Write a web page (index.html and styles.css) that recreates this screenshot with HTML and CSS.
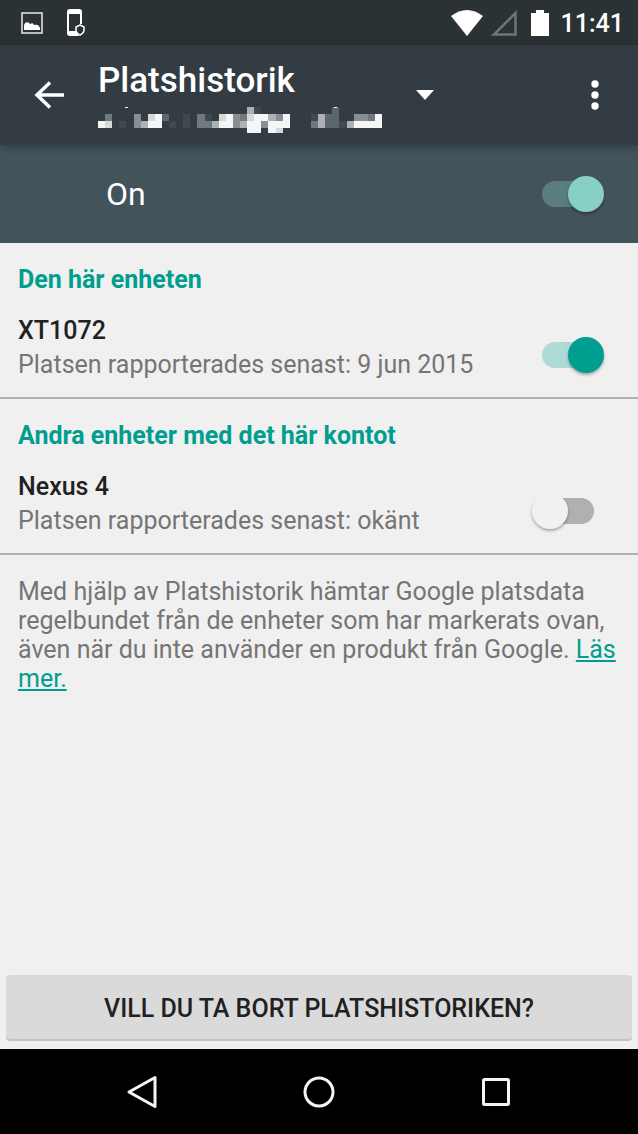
FILE: index.html
```html
<!DOCTYPE html>
<html lang="sv">
<head>
    <meta charset="UTF-8">
    <meta name="viewport" content="width=device-width, initial-scale=1.0">
    <title>Platshistorik</title>
    <link rel="stylesheet" href="styles.css">
</head>
<body>

    <div class="status-bar">
        <div class="status-group notifications">
            <svg width="22" height="22" viewBox="0 0 22 22">
                <rect x="1" y="1" width="20" height="20" fill="none" stroke="#e8ebec" stroke-width="1.500"/>
                <path d="M3 18v-4c0-4 4-5 6-2 2-1 3-1 4 1 3-1 5 0 6 3v2z" fill="#fff"/>
            </svg>
            <svg width="18" height="28" viewBox="0 0 18 28">
                <path d="M3 0h9q3 0 3 3v12h-2V5H2v17h7l3 5H3q-3 0-3-3V3q0-3 3-3z" fill="#fff"/>
                <path d="M13 16l4 2v3q0 3-4 5-4-2-4-5v-3z" fill="#2b3235" stroke="#fff" stroke-width="1.500"/>
            </svg>
        </div>
        <div class="status-group">
            <svg width="32" height="26" viewBox="0 0 32 26">
                <path d="M0 6Q16-6 32 6L16 26z" fill="#fff"/>
            </svg>
            <svg width="26" height="26" viewBox="0 0 26 26">
                <path d="M3 24.500H24.500V3z" fill="none" stroke="#6f7577" stroke-width="2.500"/>
            </svg>
            <svg class="battery" width="18" height="26" viewBox="0 0 18 26">
                <path d="M0 3h5V0h8v3h5v23H0z" fill="#fff"/>
            </svg>
            <span class="clock">11:41</span>
        </div>
    </div>

    <header class="app-bar">
        <button class="icon-button" aria-label="Tillbaka">
            <svg width="30" height="28" viewBox="0 0 30 28">
                <path d="M30 14H3M16 1.500L3 14l13 12.500" fill="none" stroke="#fff" stroke-width="3.500"/>
            </svg>
        </button>
        <button class="account" aria-label="Byt konto">
            <span class="account-text">
                <span class="title">Platshistorik</span>
                <!-- Masked account name, 40 x 4 blocks -->
                <svg class="masked" width="284" height="28" viewBox="0 0 40 4" preserveAspectRatio="none" shape-rendering="crispEdges">
                    <path fill="#3f4a50" d="M3 2h1v1h-1zM10 2h1v1h-1zM12 1h1v2h-1zM15 1h1v1h-1zM22 0h1v1h-1zM30 1h1v1h-1zM34 2h1v1h-1z"/>
                    <path fill="#5c676c" d="M9 1h1v1h-1zM32 1h1v2h-1zM33 0h1v3h-1z"/>
                    <path fill="#70797d" d="M1 1h1v1h-1zM14 1h1v2h-1zM15 2h1v1h-1zM20 1h1v1h-1zM30 2h1v1h-1zM38 1h1v1h-1z"/>
                    <path fill="#888e91" d="M5 1h1v2h-1zM19 1h1v2h-1zM23 2h1v1h-1zM25 1h1v1h-1zM36 1h2v1h-2z"/>
                    <path fill="#adb1b3" d="M6 2h1v1h-1zM16 2h1v1h-1zM20 2h1v1h-1zM21 0h1v1h-1zM24 1h1v1h-1zM31 1h1v2h-1zM35 2h1v1h-1z"/>
                    <path fill="#d6d8d9" d="M1 2h1v1h-1zM7 1h1v1h-1zM17 1h1v1h-1zM21 1h1v1h-1zM25 3h1v.7h-1z"/>
                    <path fill="#f4f5f5" d="M0 2h1v1h-1zM7 2h1v1h-1zM8 1h1v2h-1zM17 2h1v1h-1zM18 1h1v2h-1zM22 1h2v1h-2zM21 2h2v1.700h-2zM24 2h1v1.700h-1zM25 2h1v1h-1zM26 1h1v2h-1zM36 2h3v1h-3zM39 1h1v2h-1z"/>
                    <path fill="#f4f5f5" d="M3.800 0h.4v.15h-.4zM33.200 0h.4v.15h-.4z"/>
                </svg>
            </span>
            <svg width="18" height="10" viewBox="0 0 18 10">
                <path d="M0 0h18L9 10z" fill="#fff"/>
            </svg>
        </button>
        <button class="icon-button" aria-label="Fler alternativ">
            <svg width="8" height="30" viewBox="0 0 8 30">
                <g fill="#fff">
                    <circle cx="4" cy="4" r="3.700"/>
                    <circle cx="4" cy="15" r="3.700"/>
                    <circle cx="4" cy="26" r="3.700"/>
                </g>
            </svg>
        </button>
    </header>

    <div class="master-row">
        <label for="history">On</label>
        <input type="checkbox" class="switch light" id="history" checked>
    </div>

    <main>
        <section class="devices">
            <h2>Den här enheten</h2>
            <div class="device">
                <label for="xt1072">
                    <span class="device-name">XT1072</span>
                    <span class="device-info">Platsen rapporterades senast: 9 jun 2015</span>
                </label>
                <input type="checkbox" class="switch" id="xt1072" checked>
            </div>
        </section>

        <section class="devices">
            <h2>Andra enheter med det här kontot</h2>
            <div class="device">
                <label for="nexus4">
                    <span class="device-name">Nexus 4</span>
                    <span class="device-info">Platsen rapporterades senast: okänt</span>
                </label>
                <input type="checkbox" class="switch" id="nexus4">
            </div>
        </section>

        <p class="description">Med hjälp av Platshistorik hämtar Google platsdata regelbundet från de enheter som har markerats ovan, även när du inte använder en produkt från Google. <a href="#">Läs mer.</a></p>

        <button class="delete-button">VILL DU TA BORT PLATSHISTORIKEN?</button>
    </main>

    <nav class="nav-bar">
        <button aria-label="Bakåt">
            <svg width="36" height="36" viewBox="0 0 36 36">
                <path d="M31 3.500v29L5 18z" fill="none" stroke="#f4f4f4" stroke-width="3" stroke-linejoin="round"/>
            </svg>
        </button>
        <button aria-label="Hem">
            <svg width="36" height="36" viewBox="0 0 36 36">
                <circle cx="18" cy="18" r="14" fill="none" stroke="#f4f4f4" stroke-width="3"/>
            </svg>
        </button>
        <button aria-label="Översikt">
            <svg width="36" height="36" viewBox="0 0 36 36">
                <rect x="5.500" y="5.500" width="25" height="25" rx="1" fill="none" stroke="#f4f4f4" stroke-width="3"/>
            </svg>
        </button>
    </nav>

</body>
</html>
```
FILE: styles.css
```css
* {
    box-sizing: border-box;
}

body {
    font-family: Roboto, sans-serif;
    font-size: 25px;
    line-height: 29px;
    background-color: #f0f0f0;
    color: #212121;
    display: flex;
    flex-direction: column;
    margin: 0;
    min-height: 100vh;
}

button {
    font-family: inherit;
    background: none;
    border: none;
    padding: 0;
    cursor: pointer;
}

svg {
    display: block;
}

.status-bar {
    display: flex;
    justify-content: space-between;
    height: 45px;
    padding: 0 14px 0 21px;
    background-color: #2b3235;
}

.status-group {
    display: flex;
    align-items: center;
    gap: 8px;
}

.notifications {
    gap: 24px;
}

.battery {
    margin-left: 6px;
}

.clock {
    margin-left: 4px;
    padding-top: 2px;
    color: #fff;
    font-weight: 500;
}

.app-bar {
    display: flex;
    align-items: center;
    height: 100px;
    background-color: #323c42;
    box-shadow: 0 2px 8px rgba(0, 0, 0, 0.3);
    z-index: 1;
}

.icon-button {
    display: flex;
    justify-content: center;
    width: 86px;
    padding: 16px 0;
}

.icon-button:first-child {
    width: 98px;
}

.account {
    display: flex;
    align-items: center;
    gap: 34px;
    margin-right: auto;
    text-align: left;
}

.account-text {
    display: flex;
    flex-direction: column;
    gap: 6px;
    padding-top: 5px;
}

.title {
    color: #fff;
    font-size: 35px;
    font-weight: 500;
    line-height: 40px;
}

.master-row {
    display: flex;
    align-items: center;
    justify-content: space-between;
    height: 98px;
    padding: 0 34px 0 106px;
    background-color: #43535a;
    color: #fff;
    font-size: 32px;
}

.switch {
    appearance: none;
    flex: none;
    position: relative;
    width: 52px;
    height: 26px;
    margin: 0 10px 0 0;
    border-radius: 13px;
    background-color: #b0b0b0;
    cursor: pointer;
}

.switch::before {
    content: "";
    position: absolute;
    top: -5px;
    left: -10px;
    width: 36px;
    height: 36px;
    border-radius: 50%;
    background-color: #f1f1f1;
    box-shadow: 0 2px 3px rgba(0, 0, 0, 0.3);
}

.switch:checked {
    background-color: #aedad5;
}

.switch:checked::before {
    left: 26px;
    background-color: #009e8e;
}

.switch.light:checked {
    background-color: #597d80;
}

.switch.light:checked::before {
    background-color: #88cfc6;
}

main {
    flex: 1;
    display: flex;
    flex-direction: column;
}

.devices {
    padding: 22px 34px 15px 18px;
    border-bottom: 2px solid #b0b0b0;
}

h2 {
    margin: 0 0 20px;
    color: #009e8e;
    font-size: 25px;
    font-weight: 700;
    line-height: 29px;
}

.device {
    display: flex;
    align-items: flex-end;
    justify-content: space-between;
}

.device .switch {
    margin-bottom: 14px;
}

.device-name,
.device-info {
    display: block;
    line-height: 34px;
}

.device-name {
    font-weight: 500;
}

.device-info {
    color: #757575;
}

.description {
    margin: 0;
    padding: 22px 18px;
    color: #757575;
}

.description a {
    color: #009e8e;
}

.delete-button {
    height: 66px;
    margin: auto 6px 8px;
    border-radius: 4px;
    background-color: #dadada;
    box-shadow: inset 0 -2px 1px rgba(0, 0, 0, 0.1);
    color: #212121;
    font-size: 25px;
    font-weight: 500;
}

.nav-bar {
    display: flex;
    height: 85px;
    padding: 0 53px;
    background-color: #000;
}

.nav-bar button {
    flex: 1;
    display: flex;
    align-items: center;
    justify-content: center;
}
```
